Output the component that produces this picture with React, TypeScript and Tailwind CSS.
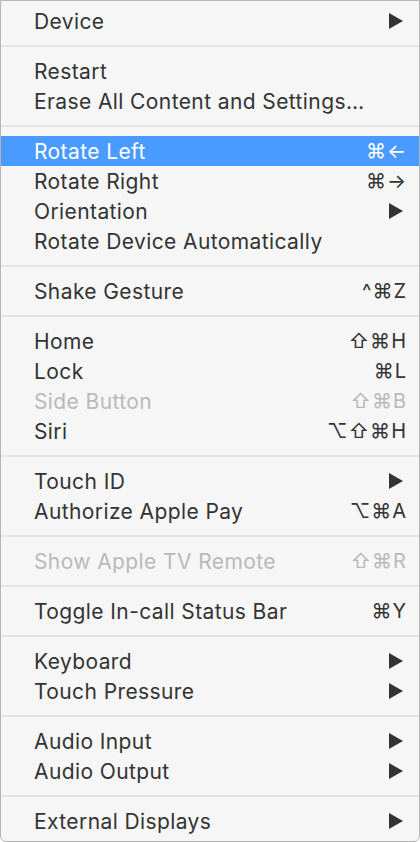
import React from 'react';

type Item =
  | { kind: 'sep' }
  | { kind: 'item'; label: string; shortcut?: string; submenu?: boolean; disabled?: boolean; active?: boolean };

const sep: Item = { kind: 'sep' };

const items: Item[] = [
  { kind: 'item', label: 'Device', submenu: true },
  sep,
  { kind: 'item', label: 'Restart' },
  { kind: 'item', label: 'Erase All Content and Settings…' },
  sep,
  { kind: 'item', label: 'Rotate Left', shortcut: '⌘←', active: true },
  { kind: 'item', label: 'Rotate Right', shortcut: '⌘→' },
  { kind: 'item', label: 'Orientation', submenu: true },
  { kind: 'item', label: 'Rotate Device Automatically' },
  sep,
  { kind: 'item', label: 'Shake Gesture', shortcut: '^⌘Z' },
  sep,
  { kind: 'item', label: 'Home', shortcut: '⇧⌘H' },
  { kind: 'item', label: 'Lock', shortcut: '⌘L' },
  { kind: 'item', label: 'Side Button', shortcut: '⇧⌘B', disabled: true },
  { kind: 'item', label: 'Siri', shortcut: '⌥⇧⌘H' },
  sep,
  { kind: 'item', label: 'Touch ID', submenu: true },
  { kind: 'item', label: 'Authorize Apple Pay', shortcut: '⌥⌘A' },
  sep,
  { kind: 'item', label: 'Show Apple TV Remote', shortcut: '⇧⌘R', disabled: true },
  sep,
  { kind: 'item', label: 'Toggle In-call Status Bar', shortcut: '⌘Y' },
  sep,
  { kind: 'item', label: 'Keyboard', submenu: true },
  { kind: 'item', label: 'Touch Pressure', submenu: true },
  sep,
  { kind: 'item', label: 'Audio Input', submenu: true },
  { kind: 'item', label: 'Audio Output', submenu: true },
  sep,
  { kind: 'item', label: 'External Displays', submenu: true },
];

const SubmenuArrow: React.FC = () => (
  <svg width="14" height="16" viewBox="0 0 14 16" className="mr-[4px]" aria-hidden="true">
    <polygon points="0,0 14,8 0,16" fill="currentColor" />
  </svg>
);

export default function App() {
  return (
    <div
      className="flex h-[842px] w-[420px] flex-col overflow-hidden rounded-b-[6px] border border-[#b4b4b4] bg-[#f6f6f6] py-[5px] text-[21px] text-[#333333]"
      style={{ fontFamily: 'Inter, "DejaVu Sans", sans-serif' }}
    >
      {items.map((item, i) => {
        if (item.kind === 'sep') {
          return (
            <div key={i} className="flex h-[20px] items-center">
              <div className="h-[2px] w-full bg-[#e4e4e4]" />
            </div>
          );
        }
        const color = item.active ? 'bg-[#4a9bff] text-white' : item.disabled ? 'text-[#b9b9b9]' : '';
        return (
          <div key={i} className={`flex h-[30px] items-center justify-between pl-[33px] pr-[12px] ${color}`}>
            <span className="leading-none tracking-[0.4px]">{item.label}</span>
            {item.submenu && <SubmenuArrow />}
            {item.shortcut && <span className="text-[20px] leading-none tracking-[1px]">{item.shortcut}</span>}
          </div>
        );
      })}
    </div>
  );
}
